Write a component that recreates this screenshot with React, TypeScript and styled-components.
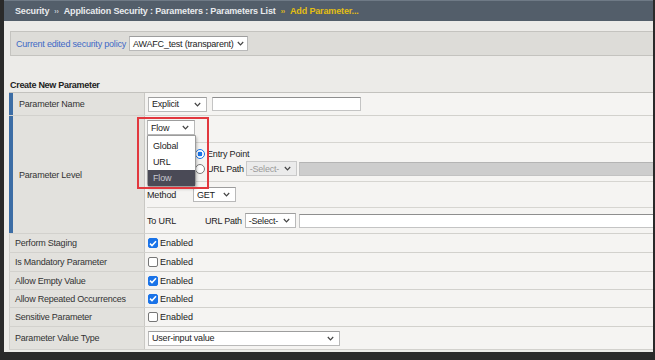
import React from "react";
import styled, { createGlobalStyle } from "styled-components";

const GlobalStyle = createGlobalStyle`
  html, body {
    margin: 0;
    padding: 0;
    background: #2a2a2a;
  }
  body {
    font-family: "Liberation Sans", Arial, sans-serif;
    font-size: 9px;
    color: #222;
  }
`;

const Screen = styled.div`
  width: 655px;
  height: 360px;
  box-sizing: border-box;
  padding: 0 2px 8px 4px;
  overflow: hidden;
`;

const Panel = styled.div`
  height: 100%;
  background: #ecebe8;
  display: flex;
  flex-direction: column;
  overflow: hidden;
`;

const TitleBar = styled.div`
  height: 21px;
  box-sizing: border-box;
  background: #535e6a;
  border-top: 1px solid #6f7a86;
  display: flex;
  align-items: center;
  padding-left: 11px;
  font-weight: bold;
  font-size: 9px;
  letter-spacing: -0.15px;
  color: #e9ebee;
  white-space: nowrap;
`;

const Crumb = styled.span<{ $active?: boolean }>`
  color: ${(p) => (p.$active ? "#e3bf12" : "#e9ebee")};
`;

const Sep = styled.span<{ $active?: boolean }>`
  font-size: 7px;
  margin: 0 5px;
  color: ${(p) => (p.$active ? "#e3bf12" : "#c9ced4")};
`;

const PolicyBar = styled.div`
  margin: 10px 0 0 6px;
  height: 25px;
  box-sizing: border-box;
  background: #dddcd8;
  border: 1px solid #c4c3bf;
  border-right: none;
  display: flex;
  align-items: center;
  padding-left: 5px;
  gap: 3px;
`;

const PolicyLabel = styled.span`
  color: #3d69c6;
  letter-spacing: -0.2px;
`;

const SectionTitle = styled.div`
  margin: 23px 0 1px 6px;
  line-height: 12px;
  font-weight: bold;
  color: #222;
  letter-spacing: -0.3px;
`;

const Table = styled.div`
  margin-left: 5px;
  border-top: 1px solid #c3c2be;
  display: flex;
  flex-direction: column;
`;

const Row = styled.div<{ $h: number }>`
  display: grid;
  grid-template-columns: 136px 1fr;
  height: ${(p) => p.$h}px;
  box-sizing: border-box;
  border-bottom: 1px solid #d2d1cd;
`;

const Label = styled.div<{ $group?: boolean }>`
  background: #e2e1dd;
  border-left: ${(p) => (p.$group ? "4px solid #3c6da5" : "1px solid #cfcecb")};
  border-right: 1px solid #c9c8c4;
  padding-left: ${(p) => (p.$group ? 6 : 5)}px;
  display: flex;
  align-items: center;
  color: #333;
  letter-spacing: -0.22px;
  white-space: nowrap;
`;

const Value = styled.div`
  background: #f5f4f2;
  display: flex;
  align-items: center;
  padding-left: 3px;
  gap: 5px;
  position: relative;
`;

const LevelCell = styled.div`
  background: #f5f4f2;
  display: flex;
  flex-direction: column;
`;

const SubRow = styled.div<{ $h: number; $last?: boolean }>`
  margin-left: 2px;
  height: ${(p) => p.$h}px;
  box-sizing: border-box;
  border-bottom: ${(p) => (p.$last ? "none" : "1px solid #d6d5d1")};
  display: flex;
  align-items: center;
  letter-spacing: -0.15px;
`;

const FlowRow = styled(SubRow)`
  align-items: flex-start;
  padding-top: 4px;
`;

const FromRow = styled(SubRow)`
  align-items: flex-start;
  padding-top: 3px;
`;

const SubLabel = styled.span`
  width: 46px;
  flex: none;
  color: #222;
`;

const PathText = styled.span<{ $indent?: number; $after?: number }>`
  margin-left: ${(p) => p.$indent ?? 0}px;
  margin-right: ${(p) => p.$after ?? 3}px;
  letter-spacing: -0.25px;
  white-space: nowrap;
`;

const RadioGroup = styled.div`
  display: flex;
  flex-direction: column;
  padding-left: 2px;
`;

const RadioLine = styled.div`
  height: 15px;
  display: flex;
  align-items: center;
  gap: 2px;
  white-space: nowrap;
`;

const Radio = styled.span<{ $on?: boolean }>`
  width: 10px;
  height: 10px;
  box-sizing: border-box;
  border-radius: 50%;
  flex: none;
  border: ${(p) => (p.$on ? "1.5px solid #1a73e8" : "1px solid #7a7a7a")};
  background: ${(p) =>
    p.$on ? "radial-gradient(circle, #1a73e8 0 2.3px, #fff 2.6px)" : "#fff"};
`;

const SelectBox = styled.div<{ $w: number; $disabled?: boolean }>`
  width: ${(p) => p.$w}px;
  height: 15px;
  box-sizing: border-box;
  flex: none;
  background: ${(p) => (p.$disabled ? "#ebebeb" : "#fff")};
  color: ${(p) => (p.$disabled ? "#9a9a9a" : "#222")};
  border: 1px solid ${(p) => (p.$disabled ? "#c9c9c9" : "#b9b9b9")};
  border-top-color: ${(p) => (p.$disabled ? "#c9c9c9" : "#9d9d9d")};
  display: flex;
  align-items: center;
  justify-content: space-between;
  gap: 3px;
  padding: 0 5px 0 3px;
  white-space: nowrap;
  overflow: hidden;
  letter-spacing: -0.2px;

  svg {
    flex: none;
  }
`;

const TextBox = styled.div<{ $w?: number; $disabled?: boolean; $gap?: number }>`
  width: ${(p) => (p.$w ? `${p.$w}px` : "auto")};
  flex: none;
  margin-left: ${(p) => p.$gap ?? 0}px;
  height: 14px;
  box-sizing: border-box;
  background: ${(p) => (p.$disabled ? "#cdcdcd" : "#fff")};
  border: 1px solid ${(p) => (p.$disabled ? "#c2c2c2" : "#c4c4c4")};
  border-top-color: ${(p) => (p.$disabled ? "#b4b4b4" : "#8e8e8e")};
`;

const FlowAnchor = styled.div`
  position: relative;
`;

const Menu = styled.div`
  position: absolute;
  top: 100%;
  left: 0;
  width: 49px;
  box-sizing: border-box;
  background: #fff;
  border: 1px solid #9c9c9c;
  border-radius: 0 0 3px 3px;
  box-shadow: 1px 2px 3px rgba(0, 0, 0, 0.25);
  padding-top: 2px;
  z-index: 5;
`;

const MenuItem = styled.div<{ $sel?: boolean }>`
  height: 16px;
  display: flex;
  align-items: center;
  padding-left: 5px;
  background: ${(p) => (p.$sel ? "#4a4a56" : "transparent")};
  color: ${(p) => (p.$sel ? "#c8c8d0" : "#222")};
`;

const Highlight = styled.div`
  position: absolute;
  left: -10px;
  top: -3px;
  width: 72px;
  height: 72px;
  box-sizing: border-box;
  border: 2px solid #e2383e;
  z-index: 6;
  pointer-events: none;
`;

const Check = styled.span<{ $on?: boolean }>`
  width: 10px;
  height: 10px;
  box-sizing: border-box;
  border-radius: 2px;
  flex: none;
  display: flex;
  align-items: center;
  justify-content: center;
  background: ${(p) => (p.$on ? "#1a73e8" : "#fff")};
  border: 1px solid ${(p) => (p.$on ? "#1a73e8" : "#767676")};
`;

const CheckField = styled.div`
  display: flex;
  align-items: center;
  gap: 2px;
`;

const Chevron = () => (
  <svg width="7" height="5" viewBox="0 0 7 5">
    <polyline points="0.8,1 3.5,3.8 6.2,1" fill="none" stroke="#444" strokeWidth="1.2" />
  </svg>
);

const Select = ({ w, text, disabled }: { w: number; text: string; disabled?: boolean }) => (
  <SelectBox $w={w} $disabled={disabled}>
    <span>{text}</span>
    <Chevron />
  </SelectBox>
);

const Checkbox = ({ on }: { on?: boolean }) => (
  <CheckField>
    <Check $on={on}>
      {on && (
        <svg width="8" height="7" viewBox="0 0 8 7">
          <polyline points="1,3.6 3,5.6 7,1.2" fill="none" stroke="#fff" strokeWidth="1.5" />
        </svg>
      )}
    </Check>
    <span>Enabled</span>
  </CheckField>
);

const flags = [
  { label: "Perform Staging", on: true, h: 19 },
  { label: "Is Mandatory Parameter", on: false, h: 19 },
  { label: "Allow Empty Value", on: true, h: 18 },
  { label: "Allow Repeated Occurrences", on: true, h: 18 },
  { label: "Sensitive Parameter", on: false, h: 19 },
];

const App = () => {
  return (
    <Screen>
      <GlobalStyle />
      <Panel>
        <TitleBar>
          <Crumb>Security</Crumb>
          <Sep>››</Sep>
          <Crumb>Application Security : Parameters : Parameters List</Crumb>
          <Sep $active>››</Sep>
          <Crumb $active>Add Parameter...</Crumb>
        </TitleBar>

        <PolicyBar>
          <PolicyLabel>Current edited security policy</PolicyLabel>
          <Select w={119} text="AWAFC_test (transparent)" />
        </PolicyBar>

        <SectionTitle>Create New Parameter</SectionTitle>

        <Table>
          <Row $h={23}>
            <Label $group>Parameter Name</Label>
            <Value>
              <Select w={59} text="Explicit" />
              <TextBox $w={149} />
            </Value>
          </Row>

          <Row $h={118}>
            <Label $group>Parameter Level</Label>
            <LevelCell>
              <FlowRow $h={27}>
                <FlowAnchor>
                  <Select w={48} text="Flow" />
                  <Menu>
                    <MenuItem>Global</MenuItem>
                    <MenuItem>URL</MenuItem>
                    <MenuItem $sel>Flow</MenuItem>
                  </Menu>
                  <Highlight />
                </FlowAnchor>
              </FlowRow>
              <FromRow $h={39}>
                <SubLabel />
                <RadioGroup>
                  <RadioLine>
                    <Radio $on />
                    <span>Entry Point</span>
                  </RadioLine>
                  <RadioLine>
                    <Radio />
                    <PathText $after={0}>URL Path</PathText>
                    <Select w={51} text="-Select-" disabled />
                    <TextBox $w={420} $disabled $gap={0} />
                  </RadioLine>
                </RadioGroup>
              </FromRow>
              <SubRow $h={26}>
                <SubLabel>Method</SubLabel>
                <Select w={43} text="GET" />
              </SubRow>
              <SubRow $h={25} $last>
                <SubLabel>To URL</SubLabel>
                <PathText $indent={12}>URL Path</PathText>
                <Select w={51} text="-Select-" />
                <TextBox $w={420} $gap={3} />
              </SubRow>
            </LevelCell>
          </Row>

          {flags.map((f) => (
            <Row $h={f.h} key={f.label}>
              <Label>{f.label}</Label>
              <Value>
                <Checkbox on={f.on} />
              </Value>
            </Row>
          ))}

          <Row $h={23}>
            <Label>Parameter Value Type</Label>
            <Value>
              <Select w={192} text="User-input value" />
            </Value>
          </Row>
        </Table>
      </Panel>
    </Screen>
  );
};

export default App;
